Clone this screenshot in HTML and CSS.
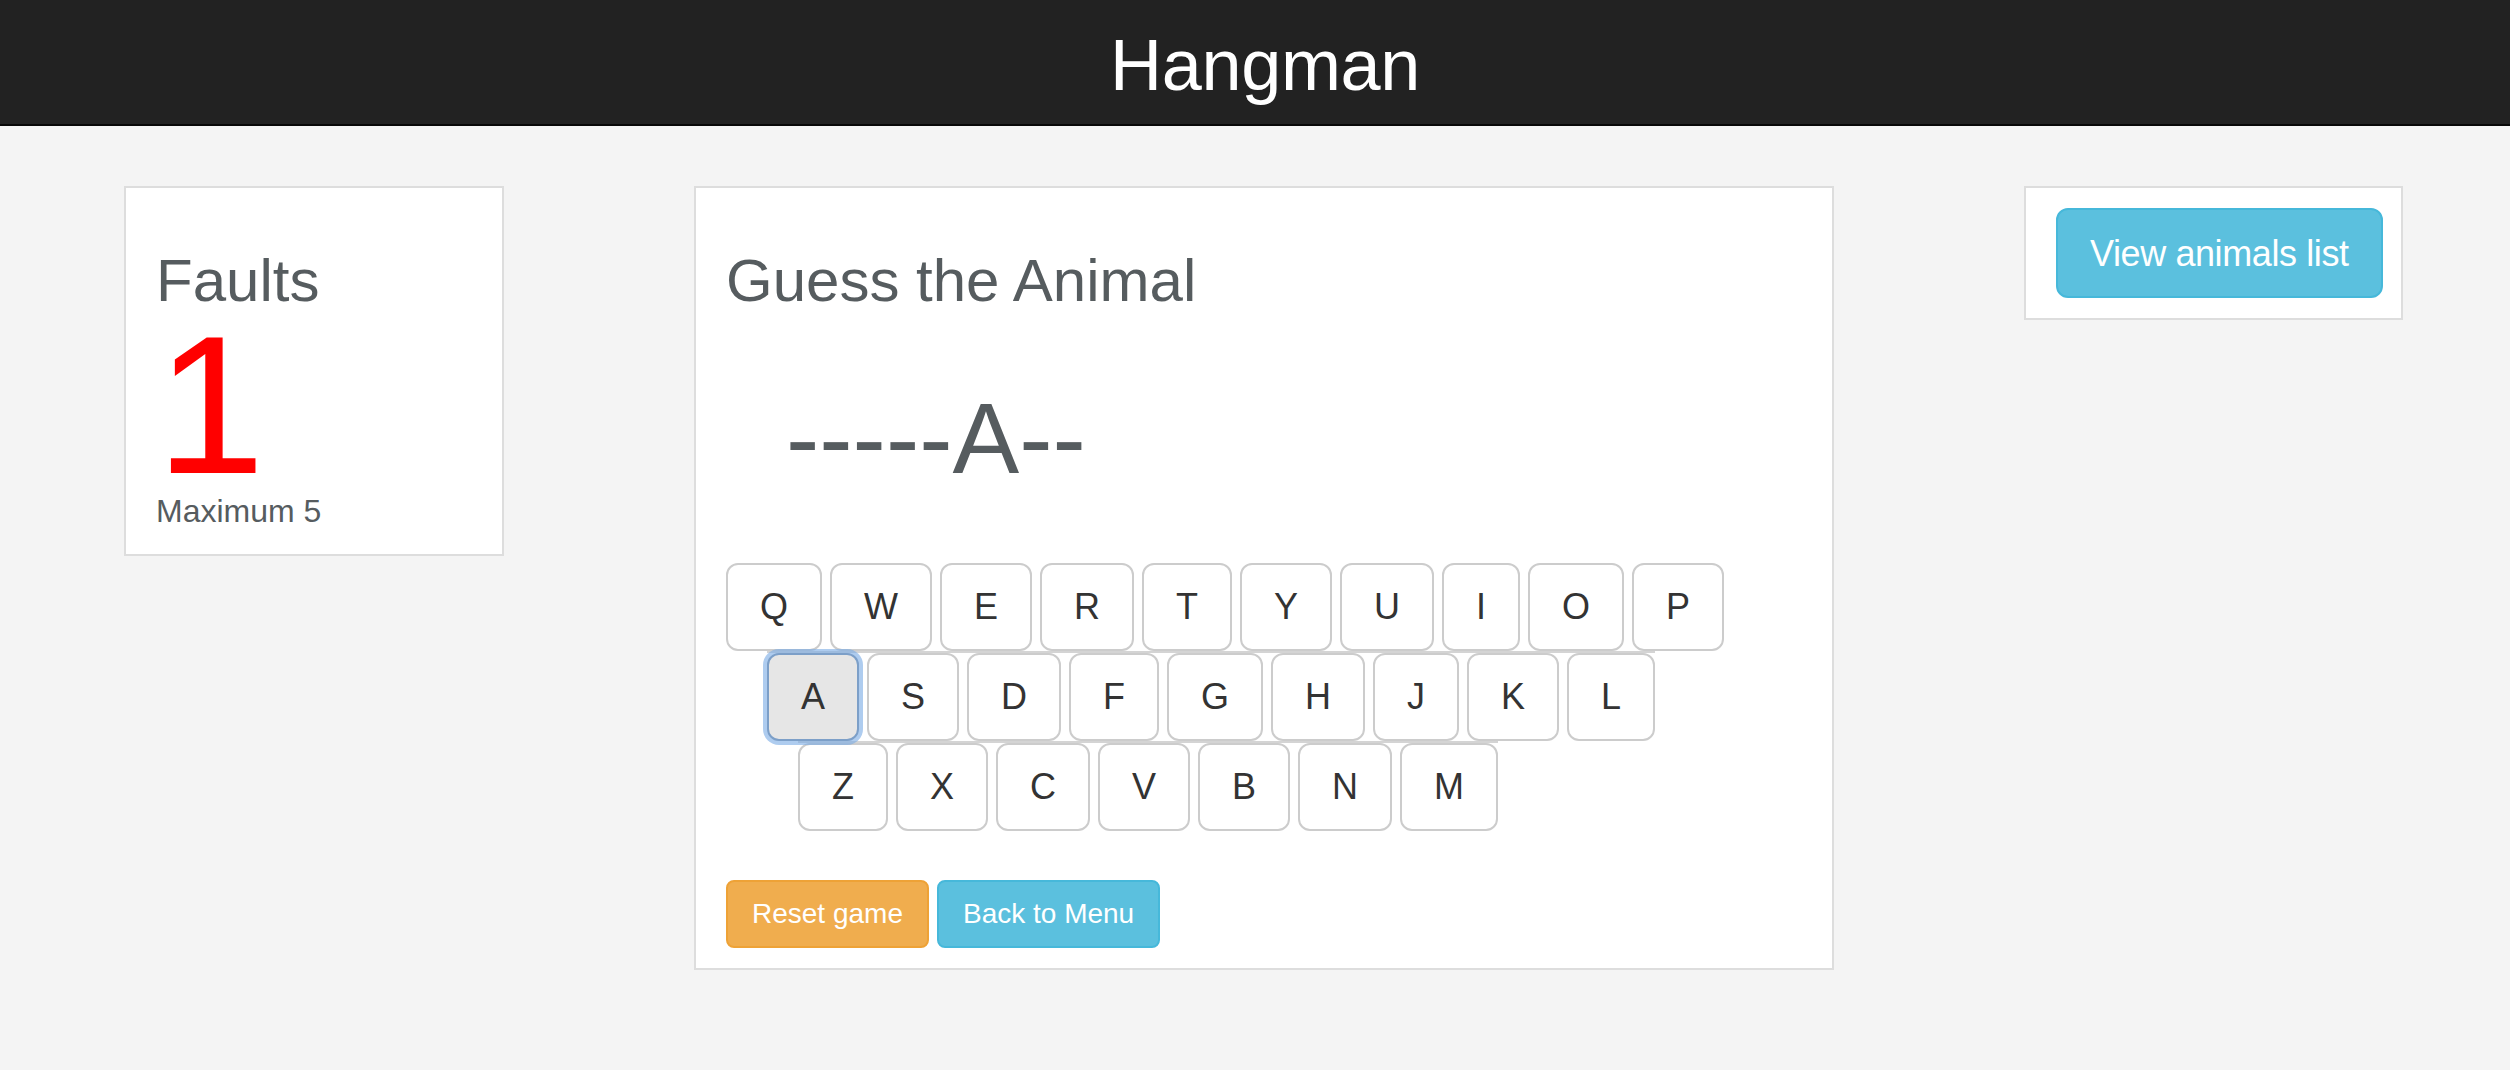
FILE: index.html
```html
<!DOCTYPE html>
<html lang="en">
<head>
<meta charset="utf-8">
<title>Hangman</title>
<link rel="stylesheet" href="styles.css">
</head>
<body>
<header class="topbar">
  <h1 class="brand">Hangman</h1>
</header>
<main class="layout">
  <section class="card faults-card">
    <h2 class="card-title">Faults</h2>
    <div class="fault-count">1</div>
    <div class="fault-max">Maximum 5</div>
  </section>

  <section class="card game-card">
    <h2 class="card-title">Guess the Animal</h2>
    <div class="word">-----A--</div>
    <div class="keyboard">
      <div class="key-row row-1">
        <button class="key">Q</button><button class="key">W</button><button class="key">E</button><button class="key">R</button><button class="key">T</button><button class="key">Y</button><button class="key">U</button><button class="key">I</button><button class="key">O</button><button class="key">P</button>
      </div>
      <div class="key-row row-2">
        <button class="key key-focused">A</button><button class="key">S</button><button class="key">D</button><button class="key">F</button><button class="key">G</button><button class="key">H</button><button class="key">J</button><button class="key">K</button><button class="key">L</button>
      </div>
      <div class="key-row row-3">
        <button class="key">Z</button><button class="key">X</button><button class="key">C</button><button class="key">V</button><button class="key">B</button><button class="key">N</button><button class="key">M</button>
      </div>
    </div>
    <div class="actions">
      <button class="btn btn-warning">Reset game</button>
      <button class="btn btn-info">Back to Menu</button>
    </div>
  </section>

  <section class="card side-card">
    <button class="btn btn-info btn-large">View animals list</button>
  </section>
</main>
</body>
</html>
```

FILE: styles.css
```css
* {
  box-sizing: border-box;
}

html, body {
  margin: 0;
  padding: 0;
}

body {
  background: #f4f4f4;
  font-family: "Liberation Sans", Arial, Helvetica, sans-serif;
  color: #565c5f;
  min-height: 1070px;
}

.topbar {
  background: #222222;
  border-bottom: 2px solid #080808;
  height: 126px;
  padding: 25px 0 0 20px;
}

.brand {
  margin: 0;
  text-align: center;
  color: #ffffff;
  font-weight: normal;
  font-size: 72px;
  line-height: 80px;
  letter-spacing: -0.3px;
}

.layout {
  display: flex;
  align-items: flex-start;
  gap: 190px;
  padding: 60px 0 0 124px;
}

.card {
  background: #ffffff;
  border: 2px solid #dddddd;
  padding: 20px 30px;
  display: flex;
  flex-direction: column;
  align-items: flex-start;
  flex-shrink: 0;
}

.faults-card {
  width: 380px;
}

.game-card {
  width: 1140px;
}

.side-card {
  width: 379px;
  padding-right: 8px;
}

.card-title {
  margin: 40px 0 20px;
  font-size: 60px;
  line-height: 66px;
  font-weight: normal;
  color: #565c5f;
  white-space: nowrap;
}

.fault-count {
  color: #ff0000;
  font-size: 196px;
  line-height: 144px;
  margin-bottom: 10px;
}

.fault-max {
  font-size: 32px;
  line-height: 46px;
  color: #565c5f;
  white-space: nowrap;
}

.word {
  margin: 49px 0 0 60px;
  font-size: 100px;
  line-height: 110px;
  color: #565c5f;
  white-space: nowrap;
}

.keyboard {
  margin-top: 70px;
  display: flex;
  flex-direction: column;
  align-items: flex-start;
}

.key-row {
  display: flex;
  gap: 8px;
}

.row-2 {
  margin-left: 41px;
  border-top: 2px solid #d4d4d4;
}

.row-3 {
  margin-left: 72px;
  border-top: 2px solid #d4d4d4;
}

.key {
  font-family: "Liberation Sans", Arial, Helvetica, sans-serif;
  font-size: 36px;
  line-height: 48px;
  padding: 18px 32px;
  height: 88px;
  background: #ffffff;
  color: #333333;
  border: 2px solid #cccccc;
  border-radius: 12px;
  cursor: pointer;
}

.key-focused {
  position: relative;
  z-index: 1;
  background: #e6e6e6;
  border-color: #7c9fc8;
  box-shadow: 0 0 0 4px rgba(120, 170, 228, 0.6);
}

.actions {
  margin-top: 49px;
  display: flex;
  gap: 8px;
}

.btn {
  font-family: "Liberation Sans", Arial, Helvetica, sans-serif;
  font-size: 28px;
  line-height: 40px;
  padding: 12px 24px;
  border: 2px solid transparent;
  border-radius: 8px;
  color: #ffffff;
  cursor: pointer;
  white-space: nowrap;
}

.btn-warning {
  background: #f0ad4e;
  border-color: #eea236;
}

.btn-info {
  background: #5bc0de;
  border-color: #46b8da;
}

.btn-large {
  font-size: 36px;
  line-height: 48px;
  padding: 20px 32px 18px;
  border-radius: 12px;
  letter-spacing: -0.4px;
}
```
